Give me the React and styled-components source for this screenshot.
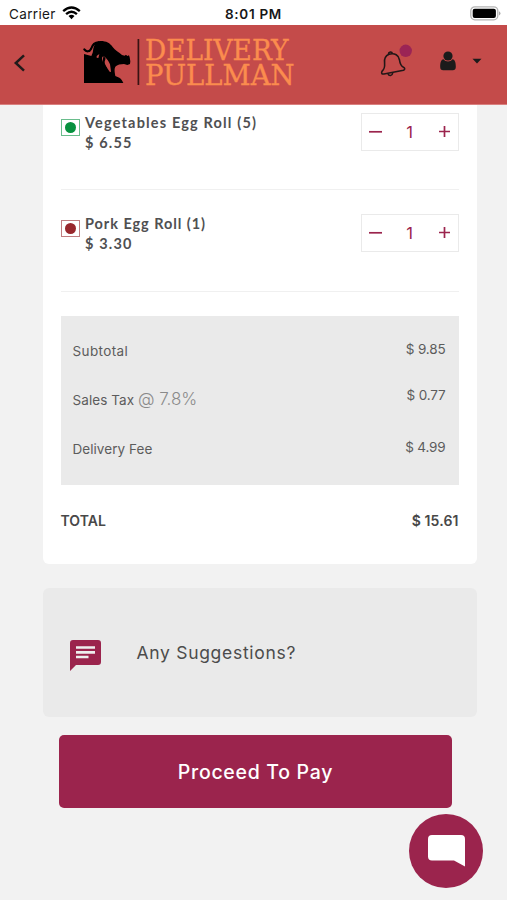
import React from 'react';
import styled, { createGlobalStyle } from 'styled-components';

const BERRY = '#9b244d';

const GlobalStyle = createGlobalStyle`
  * { box-sizing: border-box; }
  body { margin: 0; background: #f2f2f2; font-family: Inter, "Liberation Sans", sans-serif; }
  button { border: 0; padding: 0; background: none; font: inherit; color: inherit; }
`;

const Screen = styled.div`
  position: relative;
  width: 507px;
  height: 900px;
  overflow: hidden;
  display: flex;
  flex-direction: column;
  background: #f2f2f2;
`;

const StatusBar = styled.div`
  height: 25px;
  flex: none;
  display: grid;
  grid-template-columns: 1fr auto 1fr;
  align-items: center;
  padding: 2px 6px 0 9px;
  background: #fff;
  color: #171717;
  font-size: 13.5px;
`;

const Carrier = styled.div`
  display: flex;
  align-items: center;
  gap: 6px;
  letter-spacing: 0.35px;
  svg { margin-top: -2px; }
`;

const Clock = styled.div`
  margin-right: 3px;
  font-weight: 600;
  font-size: 13.5px;
  letter-spacing: 0.7px;
`;

const Battery = styled.div`
  display: flex;
  justify-content: flex-end;
`;

const Header = styled.header`
  height: 80px;
  flex: none;
  display: flex;
  align-items: flex-start;
  background: #c44b4a;
  border-bottom: 1px solid #d9807f;
  svg { display: block; flex: none; }
`;

const BackButton = styled.button`
  margin: 29px 0 0 13px;
  width: 13px;
`;

const Brand = styled.div`
  margin: 11px 0 0 56px;
  width: 220px;
  svg { overflow: visible; }
`;

const BellButton = styled.button`
  margin: 18px 0 0 78px;
  width: 34px;
`;

const UserButton = styled.button`
  margin: 26px 0 0 26px;
  display: flex;
  align-items: center;
  gap: 16px;
`;

const OrderCard = styled.section`
  flex: none;
  width: 434px;
  height: 459px;
  margin-left: 42.5px;
  padding: 0 18px;
  background: #fff;
  border-radius: 0 0 6px 6px;
`;

const ItemRow = styled.div`
  display: flex;
  align-items: flex-start;
  height: ${(p) => (p.$first ? 85 : 101.5)}px;
  padding-top: ${(p) => (p.$first ? 8 : 24)}px;
  border-bottom: 1px solid #f0f0f0;
`;

const DietMark = styled.div`
  width: 19px;
  height: 17px;
  margin: 6px 5.5px 0 0;
  display: grid;
  place-items: center;
  border: 1px solid ${(p) => p.$color}99;
  &::after {
    content: '';
    width: 11px;
    height: 11px;
    border-radius: 50%;
    background: ${(p) => p.$color};
  }
`;

const ItemText = styled.div`
  flex: 1;
  display: flex;
  flex-direction: column;
  color: #505052;
  font-family: Lato, sans-serif;
  font-weight: 700;
  font-size: 14.5px;
  line-height: 19.5px;
`;

const ItemName = styled.span`
  letter-spacing: ${(p) => p.$tracking}px;
`;

const ItemPrice = styled.span`
  letter-spacing: 1.15px;
`;

const Stepper = styled.div`
  width: 98px;
  height: 38px;
  display: flex;
  align-items: center;
  justify-content: space-between;
  padding: 0 7px 1px;
  border: 1px solid #eaeaea;
  color: ${BERRY};
`;

const StepButton = styled.button`
  width: 13px;
  svg { display: block; }
`;

const Quantity = styled.span`
  font-family: Inter, sans-serif;
  font-size: 16.5px;
  line-height: 36px;
`;

const Summary = styled.div`
  width: 398px;
  height: 169px;
  margin-top: 24.5px;
  padding: 24px 13px 0 12px;
  display: flex;
  flex-direction: column;
  background: #eaeaea;
  color: #5c5c5c;
  font-size: 13.5px;
`;

const SummaryRow = styled.div`
  display: flex;
  justify-content: space-between;
  height: ${(p) => p.$height}px;
`;

const SummaryLabel = styled.span`
  line-height: 23px;
  letter-spacing: ${(p) => p.$tracking}px;
`;

const TaxRate = styled.span`
  color: #8a8a8a;
  font-size: 17px;
  font-weight: 300;
  line-height: 20px;
  letter-spacing: -0.05px;
`;

const Amount = styled.span`
  line-height: ${(p) => p.$line}px;
  letter-spacing: -0.15px;
`;

const TotalRow = styled.div`
  display: flex;
  justify-content: space-between;
  margin-top: 26px;
  color: #484848;
  font-weight: 600;
  font-size: 14px;
  line-height: 20px;
`;

const TotalLabel = styled.span`
  letter-spacing: 0.05px;
`;

const TotalAmount = styled.span`
  letter-spacing: 0.12px;
`;

const SuggestionCard = styled.section`
  flex: none;
  width: 434px;
  height: 129px;
  margin: 24px 0 0 42.5px;
  padding: 0 27px;
  display: flex;
  align-items: center;
  gap: 36px;
  background: #eaeaea;
  border-radius: 6px;
  svg { margin-top: 5px; }
`;

const SuggestionText = styled.span`
  color: #4c4c4c;
  font-size: 17.5px;
  letter-spacing: 0.7px;
`;

const PayButton = styled.button`
  flex: none;
  width: 393px;
  height: 73px;
  margin: 18px 0 0 59px;
  border-radius: 5px;
  background: ${BERRY};
  color: #fff;
  font-size: 19.5px;
  font-weight: 500;
  letter-spacing: 0.7px;
`;

const ChatButton = styled.button`
  position: absolute;
  right: 24px;
  bottom: 12px;
  width: 74px;
  height: 74px;
  display: grid;
  place-items: center;
  border-radius: 50%;
  background: ${BERRY};
`;

const WifiIcon = () => (
  <svg width="19" height="14" viewBox="0 0 19 14" fill="none" stroke="#000" strokeWidth="2.4">
    <path d="M1.2 5.1Q9.5-2 17.8 5.1" />
    <path d="M4.1 8.1Q9.5 3.4 14.9 8.1" />
    <path d="M6.5 10Q9.5 7.6 12.5 10L9.5 13.2Z" fill="#000" stroke="none" />
  </svg>
);

const BatteryIcon = () => (
  <svg width="31" height="15" viewBox="0 0 31 15">
    <rect x="0.8" y="0.8" width="27" height="13" rx="4" fill="#fff" stroke="#b4b4b4" strokeWidth="1.3" />
    <rect x="2.7" y="2.7" width="23.2" height="9.2" rx="2" fill="#000" />
    <path d="M29 5.2q3 2.2 0 4.4z" fill="#aaa" />
  </svg>
);

const Logo = () => (
  <svg width="220" height="52" viewBox="0 0 220 52">
    <g transform="translate(-2 0) scale(.33333)">
      <path d="M13 40C19 49 29 47 33 39C37 27 44 19 56 19" fill="none" stroke="#000" strokeWidth="6.5" strokeLinecap="round" />
      <path d="M12 54L34 60L38 50C40 43 39 38 42 31C46 21 52 15 62 15C79 15 90 21 98 33C105 43 117 49 126 57L134 59L138 56L142 60L147 58L149 64L151 76L150 84L142 87L132 84C123 84 111 86 106 92C103 98 103 105 106 120L118 125C124 129 127 134 130 141H12Z" />
      <path d="M50 60L58 54L55 66L50 65ZM67 62L74 62C80 68 86 74 90 85L92 98L93 108L89 107L82 97L70 80C66 74 65 67 67 62Z" fill="#c44b4a" />
      <path d="M70 63C80 63 76 71 74 77C73 82 79 91 81 97L77 97C73 90 68 82 67 78Z" />
    </g>
    <path d="M56.4 3v46" stroke="#381313" strokeWidth="1.7" />
    <g fill="#fb8c4e" stroke="#fb8c4e" strokeWidth="0.35" fontFamily='"DejaVu Serif", serif' fontSize="28">
      <text x="63" y="23.8" textLength="143.5" lengthAdjust="spacingAndGlyphs">DELIVERY</text>
      <text x="63" y="48.5" textLength="149.5" lengthAdjust="spacingAndGlyphs">PULLMAN</text>
    </g>
  </svg>
);

const BellIcon = () => (
  <svg width="34" height="36" viewBox="0 0 34 36">
    <g fill="none" stroke="#221717" strokeWidth="1.6" strokeLinejoin="round">
      <path d="M9 11.2C5 13 4 16 4.6 20C5 25 4 26.3 2 28.4C1 30.6 2 31.2 4 31L23.5 27.3C25.2 26.4 25 25 23.5 24.3C20.5 22.8 20 21 19.5 17C18.7 12.3 15 9.7 9 11.2Z" />
      <path d="M8.4 11.3C8.4 8.7 11.8 8.2 12.5 10.7M8 30.7C9 33.4 12.3 33 12.7 30" />
    </g>
    <circle cx="25.7" cy="7.8" r="6.2" fill="#9b2455" />
  </svg>
);

const UserIcon = () => (
  <svg width="16" height="20" viewBox="0 0 16 20" fill="#1b1b1b">
    <circle cx="8" cy="5" r="4.6" />
    <path d="M3.5 8.3C5.8 11.2 10.2 11.2 12.5 8.3C15.1 9 15.8 11.5 15.8 16C15.8 18.2 14.6 19.2 12.8 19.2H3.2C1.4 19.2.2 18.2.2 16C.2 11.5.9 9 3.5 8.3Z" />
  </svg>
);

const StepIcon = ({ plus }) => (
  <svg width="13" height="13" viewBox="0 0 13 13" stroke={BERRY} strokeWidth="1.7">
    <path d={plus ? 'M1 6.5h11M6.5 1v11' : 'M0 6.8h13'} />
  </svg>
);

const items = [
  { name: 'Vegetables Egg Roll (5)', price: '$ 6.55', color: '#07913f', tracking: 1.17 },
  { name: 'Pork Egg Roll (1)', price: '$ 3.30', color: '#98282d', tracking: 0.95 },
];

export default function App() {
  return (
    <Screen>
      <GlobalStyle />
      <StatusBar>
        <Carrier>
          Carrier
          <WifiIcon />
        </Carrier>
        <Clock>8:01 PM</Clock>
        <Battery>
          <BatteryIcon />
        </Battery>
      </StatusBar>
      <Header>
        <BackButton aria-label="Back">
          <svg width="13" height="18" viewBox="0 0 13 18" fill="none" stroke="#201b1b" strokeWidth="2.5">
            <path d="M11 1.4L2.8 9L11 16.6" />
          </svg>
        </BackButton>
        <Brand>
          <Logo />
        </Brand>
        <BellButton aria-label="Notifications">
          <BellIcon />
        </BellButton>
        <UserButton aria-label="Account">
          <UserIcon />
          <svg width="10" height="6" viewBox="0 0 10 6">
            <path d="M.5.8h9L5 5.5Z" fill="#1b1b1b" />
          </svg>
        </UserButton>
      </Header>

      <OrderCard>
        {items.map((item, i) => (
          <ItemRow key={item.name} $first={i === 0}>
            <DietMark $color={item.color} />
            <ItemText>
              <ItemName $tracking={item.tracking}>{item.name}</ItemName>
              <ItemPrice>{item.price}</ItemPrice>
            </ItemText>
            <Stepper>
              <StepButton aria-label="Decrease">
                <StepIcon />
              </StepButton>
              <Quantity>1</Quantity>
              <StepButton aria-label="Increase">
                <StepIcon plus />
              </StepButton>
            </Stepper>
          </ItemRow>
        ))}
        <Summary>
          <SummaryRow $height={49}>
            <SummaryLabel $tracking={0.38}>Subtotal</SummaryLabel>
            <Amount $line={19}>$ 9.85</Amount>
          </SummaryRow>
          <SummaryRow $height={49}>
            <SummaryLabel $tracking={0.08}>
              Sales Tax <TaxRate>@ 7.8%</TaxRate>
            </SummaryLabel>
            <Amount $line={13}>$ 0.77</Amount>
          </SummaryRow>
          <SummaryRow $height={40}>
            <SummaryLabel $tracking={0.05}>Delivery Fee</SummaryLabel>
            <Amount $line={18}>$ 4.99</Amount>
          </SummaryRow>
        </Summary>
        <TotalRow>
          <TotalLabel>TOTAL</TotalLabel>
          <TotalAmount>$ 15.61</TotalAmount>
        </TotalRow>
      </OrderCard>

      <SuggestionCard>
        <svg width="31" height="31" viewBox="0 0 31 31">
          <path d="M3 0H28Q31 0 31 3V22Q31 25 28 25H6L0 31V3Q0 0 3 0Z" fill={BERRY} />
          <path d="M6 7.5H25M6 12.3H25M6 17H18.5" stroke="#eee" strokeWidth="2.7" />
        </svg>
        <SuggestionText>Any Suggestions?</SuggestionText>
      </SuggestionCard>

      <PayButton>Proceed To Pay</PayButton>

      <ChatButton aria-label="Chat">
        <svg width="37" height="32" viewBox="0 0 37 32">
          <path d="M4 0H33Q37 0 37 4V31.5L26 25.5H4Q0 25.5 0 21.5V4Q0 0 4 0Z" fill="#fff" />
        </svg>
      </ChatButton>
    </Screen>
  );
}
